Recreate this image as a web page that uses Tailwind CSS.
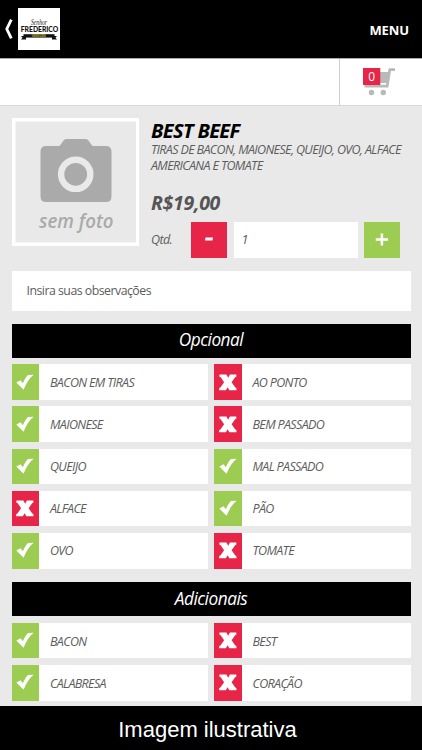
<!DOCTYPE html>
<html lang="pt-BR">
<head>
<meta charset="utf-8">
<meta name="viewport" content="width=device-width, initial-scale=1">
<title>Senhor Frederico</title>
<script src="https://cdn.jsdelivr.net/npm/@tailwindcss/browser@4"></script>
</head>
<body class="bg-[#e9e9e9]">
<svg class="hidden">
  <symbol id="check" viewBox="0 0 18 17"><path d="M0.300 8.400 4.600 6.200 6.800 9.200C8.400 5.600 10.100 2.800 12 1L17.600 0.800C13 4.600 10.200 9.400 7.600 15.800Z" fill="#fff"/></symbol>
  <symbol id="cross" viewBox="0 0 18 17"><path d="M0.400 0.500H7.400L9.200 3.800 10.900 0.500H17.300V2.800L16.100 3.200 12.600 8.200 16.300 13.500 17.400 13.900V16.200H10.300L8.600 13.200 6.900 16.200H0.200V13.900L1.400 13.500 5.100 8.200 1.700 3.200 0.400 2.800Z" fill="#fff"/></symbol>
</svg>
<div class="flex h-[750px] w-[422px] flex-col overflow-hidden bg-[#e9e9e9] font-['Open_Sans',sans-serif] text-[12.5px] text-[#5c5c5c]">
  <header class="flex h-[58px] shrink-0 items-center bg-black pr-[13px] pl-[5px]">
    <svg class="h-5 w-[8px]" viewBox="0 0 8 20"><path d="M6.300.6 1.800 10l4.500 9.400" fill="none" stroke="#fff" stroke-width="2.800"/></svg>
    <svg class="ml-[5px] h-[42px] w-[42px] bg-white" viewBox="0 0 42 42">
      <text x="21" y="16.600" text-anchor="middle" font-family="Liberation Serif, serif" font-style="italic" font-size="8" textLength="16" lengthAdjust="spacingAndGlyphs" fill="#222">Senhor</text>
      <text x="2.800" y="24" font-family="Lato, sans-serif" font-weight="900" font-size="7.400" textLength="37.400" lengthAdjust="spacingAndGlyphs" fill="#111">FREDERICO</text>
      <path d="M3 28h5v3.500H3l1.500-1.800ZM39 28h-5v3.500h5l-1.500-1.800Z" fill="#111"/>
      <path d="M5.500 26.200h31v3.400h-31Z" fill="#111"/>
      <text x="13.800" y="29" font-family="Lato, sans-serif" font-weight="700" font-size="2.800" textLength="14" lengthAdjust="spacingAndGlyphs" fill="#d6c42e">HAMBURGUERIA</text>
    </svg>
    <span class="mt-[3px] ml-auto text-[13px] font-bold tracking-[-0.1px] text-white">MENU</span>
  </header>
  <div class="flex h-[48px] shrink-0 border-t border-b border-t-[#aaa] border-b-[#d9d9d9] bg-white">
    <div class="w-[339px]"></div>
    <div class="flex-1 border-l border-[#ccc] pt-[8px] pl-[23px]">
      <svg class="h-[30px] w-[34px]" viewBox="0 0 34 30">
        <path d="M32 2.600H26.800L24.200 19.200H1.500" fill="none" stroke="#b9b9b9" stroke-width="2.800"/>
        <path d="M14 5h12.200l-1.800 11H12Z" fill="#b9b9b9"/>
        <circle cx="8.500" cy="25.500" r="2.700" fill="#b9b9b9"/><circle cx="20.300" cy="25.500" r="2.700" fill="#b9b9b9"/>
        <path d="M0 1h17.300v17H0Z" fill="#e62548"/>
        <text x="8.700" y="13.900" text-anchor="middle" font-family="Open Sans, sans-serif" font-size="12" fill="#fff">0</text>
      </svg>
    </div>
  </div>
  <main class="flex-1 overflow-hidden px-[11.500px] pt-[12px]">
    <section class="flex">
      <svg class="h-[128px] w-[127.500px] shrink-0" viewBox="0 0 127.500 128">
        <path d="M1.750 1.750h124v124.500h-124Z" fill="none" stroke="#fff" stroke-width="3.500"/>
        <path d="M34 28Q28.500 28 28.500 33.500V78.500Q28.500 84 34 84H94Q99.500 84 99.500 78.500V33.500Q99.500 28 94 28H80.500L76 22Q75 21 73.500 21H54.500Q53 21 52 22L47.500 28Z" fill="#aaa"/>
        <circle cx="63.700" cy="56.300" r="14.600" fill="none" stroke="#e9e9e9" stroke-width="6.400"/>
        <text x="64.300" y="109.800" text-anchor="middle" font-family="Open Sans, sans-serif" font-style="italic" font-weight="600" font-size="19.500" textLength="74.500" lengthAdjust="spacingAndGlyphs" fill="#aaa">sem foto</text>
      </svg>
      <div class="ml-[12px] flex-1 italic">
        <h1 class="mt-[1px] h-[23px] text-[20px] leading-[24px] font-bold tracking-[-0.650px] text-black">BEST BEEF</h1>
        <p class="text-[12.500px] leading-[16px] tracking-[-0.640px] whitespace-nowrap">TIRAS DE BACON, MAIONESE, QUEIJO, OVO, ALFACE<br>AMERICANA E TOMATE</p>
        <p class="mt-[17px] h-[31px] text-[19.500px] leading-[24px] font-bold tracking-[-0.300px] text-[#555]">R$19,00</p>
        <div class="flex h-[36px] items-center">
          <span class="w-[40px] text-[12.500px] tracking-[-0.600px]">Qtd.</span>
          <svg class="h-[36px] w-[36px] bg-[#e62548]" viewBox="0 0 36 36"><path d="M14.500 15.500h7.500l-.5 3h-7.500Z" fill="#fff"/></svg>
          <span class="mx-[6.500px] flex h-[36px] w-[124px] items-center bg-white pl-[8px]">1</span>
          <svg class="h-[36px] w-[36px] bg-[#9ccc52]" viewBox="0 0 36 36"><path d="M11.700 17.600h12.400M17.900 11.600v12" fill="none" stroke="#fff" stroke-width="2.500"/></svg>
        </div>
      </div>
    </section>
    <div class="mt-[13px] flex h-[39.500px] items-center bg-white pl-[15px] text-[12.300px] tracking-[-0.500px]">Insira suas observações</div>
    <h2 class="mt-[13px] mb-[6.800px] flex h-[34px] items-center justify-center bg-black pb-[1.500px] text-[17.300px] tracking-[-0.500px] text-white italic">Opcional</h2>
    <div class="grid auto-rows-[35.500px] grid-cols-2 gap-x-[6px] gap-y-[6.700px] tracking-[-0.650px] italic">
      <div class="flex items-center bg-white"><span class="flex h-full w-[27.500px] items-center justify-center bg-[#9ccc52]"><svg class="h-[17px] w-[18px]"><use href="#check"/></svg></span><span class="mt-[2px] ml-[11px]">BACON EM TIRAS</span></div>
      <div class="flex items-center bg-white"><span class="flex h-full w-[27.500px] items-center justify-center bg-[#e62548]"><svg class="h-[17px] w-[18px]"><use href="#cross"/></svg></span><span class="mt-[2px] ml-[11px]">AO PONTO</span></div>
      <div class="flex items-center bg-white"><span class="flex h-full w-[27.500px] items-center justify-center bg-[#9ccc52]"><svg class="h-[17px] w-[18px]"><use href="#check"/></svg></span><span class="mt-[2px] ml-[11px]">MAIONESE</span></div>
      <div class="flex items-center bg-white"><span class="flex h-full w-[27.500px] items-center justify-center bg-[#e62548]"><svg class="h-[17px] w-[18px]"><use href="#cross"/></svg></span><span class="mt-[2px] ml-[11px]">BEM PASSADO</span></div>
      <div class="flex items-center bg-white"><span class="flex h-full w-[27.500px] items-center justify-center bg-[#9ccc52]"><svg class="h-[17px] w-[18px]"><use href="#check"/></svg></span><span class="mt-[2px] ml-[11px]">QUEIJO</span></div>
      <div class="flex items-center bg-white"><span class="flex h-full w-[27.500px] items-center justify-center bg-[#9ccc52]"><svg class="h-[17px] w-[18px]"><use href="#check"/></svg></span><span class="mt-[2px] ml-[11px]">MAL PASSADO</span></div>
      <div class="flex items-center bg-white"><span class="flex h-full w-[27.500px] items-center justify-center bg-[#e62548]"><svg class="h-[17px] w-[18px]"><use href="#cross"/></svg></span><span class="mt-[2px] ml-[11px]">ALFACE</span></div>
      <div class="flex items-center bg-white"><span class="flex h-full w-[27.500px] items-center justify-center bg-[#9ccc52]"><svg class="h-[17px] w-[18px]"><use href="#check"/></svg></span><span class="mt-[2px] ml-[11px]">PÃO</span></div>
      <div class="flex items-center bg-white"><span class="flex h-full w-[27.500px] items-center justify-center bg-[#9ccc52]"><svg class="h-[17px] w-[18px]"><use href="#check"/></svg></span><span class="mt-[2px] ml-[11px]">OVO</span></div>
      <div class="flex items-center bg-white"><span class="flex h-full w-[27.500px] items-center justify-center bg-[#e62548]"><svg class="h-[17px] w-[18px]"><use href="#cross"/></svg></span><span class="mt-[2px] ml-[11px]">TOMATE</span></div>
    </div>
    <h2 class="mt-[13.500px] mb-[6.800px] flex h-[34px] items-center justify-center bg-black pb-[1px] text-[17.300px] tracking-[-0.500px] text-white italic">Adicionais</h2>
    <div class="grid auto-rows-[35.500px] grid-cols-2 gap-x-[6px] gap-y-[6.700px] tracking-[-0.650px] italic">
      <div class="flex items-center bg-white"><span class="flex h-full w-[27.500px] items-center justify-center bg-[#9ccc52]"><svg class="h-[17px] w-[18px]"><use href="#check"/></svg></span><span class="mt-[3px] ml-[11px]">BACON</span></div>
      <div class="flex items-center bg-white"><span class="flex h-full w-[27.500px] items-center justify-center bg-[#e62548]"><svg class="h-[17px] w-[18px]"><use href="#cross"/></svg></span><span class="mt-[3px] ml-[11px]">BEST</span></div>
      <div class="flex items-center bg-white"><span class="flex h-full w-[27.500px] items-center justify-center bg-[#9ccc52]"><svg class="h-[17px] w-[18px]"><use href="#check"/></svg></span><span class="mt-[3px] ml-[11px]">CALABRESA</span></div>
      <div class="flex items-center bg-white"><span class="flex h-full w-[27.500px] items-center justify-center bg-[#e62548]"><svg class="h-[17px] w-[18px]"><use href="#cross"/></svg></span><span class="mt-[3px] ml-[11px]">CORAÇÃO</span></div>
    </div>
  </main>
  <footer class="flex h-[44px] shrink-0 items-center justify-center bg-black pt-[3px] pr-[7px] font-['Liberation_Sans',sans-serif] text-[22px] text-white">Imagem ilustrativa</footer>
</div>
</body>
</html>
